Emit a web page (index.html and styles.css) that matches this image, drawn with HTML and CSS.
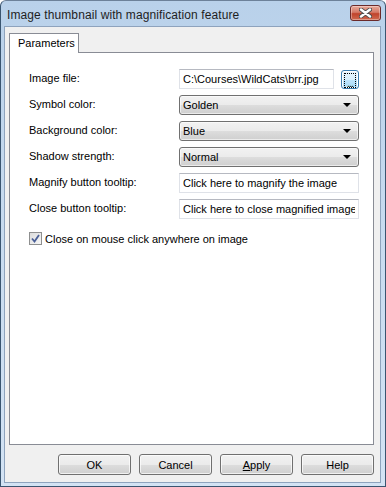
FILE: index.html
```html
<!DOCTYPE html>
<html lang="en">
<head>
  <meta charset="UTF-8" />
  <title>Image thumbnail with magnification feature</title>
  <link rel="stylesheet" href="styles.css">
</head>
<body>
  <div class="window">
    <div class="titlebar">
      <span class="title">Image thumbnail with magnification feature</span>
      <button class="close-btn" type="button" aria-label="Close">
        <svg width="13" height="10" viewBox="0 0 13 10">
          <path d="M2 1.5 L11 8.5 M11 1.5 L2 8.5" stroke="#4d4d4d" stroke-width="4.2" stroke-linecap="round" fill="none" />
          <path d="M2 1.5 L11 8.5 M11 1.5 L2 8.5" stroke="#fff" stroke-width="2.4" stroke-linecap="round" fill="none" />
        </svg>
      </button>
    </div>

    <div class="client">
      <div class="tabs">
        <div class="tab active">Parameters</div>
      </div>

      <div class="panel">
        <div class="form-grid">
          <label for="image-file">Image file:</label>
          <div class="file-row">
            <input type="text" id="image-file" class="field file-field" value="C:\Courses\WildCats\brr.jpg" />
            <button type="button" class="browse-btn"><span class="focus-rect">...</span></button>
          </div>

          <label for="symbol-color">Symbol color:</label>
          <div class="combo">
            <select id="symbol-color"><option>Golden</option></select>
          </div>

          <label for="bg-color">Background color:</label>
          <div class="combo">
            <select id="bg-color"><option>Blue</option></select>
          </div>

          <label for="shadow">Shadow strength:</label>
          <div class="combo">
            <select id="shadow"><option>Normal</option></select>
          </div>

          <label for="magnify-tip">Magnify button tooltip:</label>
          <input type="text" id="magnify-tip" class="field" value="Click here to magnify the image" />

          <label for="close-tip">Close button tooltip:</label>
          <input type="text" id="close-tip" class="field" value="Click here to close magnified image" />
        </div>

        <label class="check-row">
          <span class="checkbox">
            <svg width="9" height="9" viewBox="0 0 9 9">
              <path d="M1 4.5 L3.5 7.5 L8 1" stroke="#4a5f97" stroke-width="1.8" fill="none" />
            </svg>
          </span>
          Close on mouse click anywhere on image
        </label>
      </div>

      <div class="buttons">
        <button type="button" class="dlg-btn">OK</button>
        <button type="button" class="dlg-btn">Cancel</button>
        <button type="button" class="dlg-btn"><u>A</u>pply</button>
        <button type="button" class="dlg-btn">Help</button>
      </div>
    </div>
  </div>
</body>
</html>
```

FILE: styles.css
```css
html, body {
  margin: 0;
  padding: 0;
}
body {
  font-family: 'Liberation Sans', Arial, sans-serif;
  font-size: 11px;
  color: #000;
  background: #fff;
}

/* window frame */
.window {
  width: 386px;
  height: 487px;
  box-sizing: border-box;
  display: flex;
  flex-direction: column;
  background: linear-gradient(to bottom, #b9d1ea 0%, #c6daef 40%, #d3e3f4 100%);
  border: 1px solid #3a5570;
  border-top-color: #6d8199;
  border-radius: 6px 6px 0 0;
}
.titlebar {
  height: 25px;
  display: flex;
  align-items: flex-start;
  justify-content: space-between;
  padding: 0 4px 0 6px;
}
.title {
  font-size: 12px;
  color: #1e1e1e;
  margin-top: 7px;
  letter-spacing: 0.1px;
}
.close-btn {
  width: 31px;
  height: 16px;
  margin-top: 4px;
  padding: 0;
  border: 1px solid #6b2a2a;
  border-radius: 3px;
  background: linear-gradient(to bottom, #e9a99a 0%, #d47a68 45%, #c0432c 55%, #cf6a50 100%);
  box-shadow: inset 0 0 0 1px rgba(255,255,255,0.35);
  display: flex;
  align-items: center;
  justify-content: center;
}

.client {
  flex: 1;
  display: flex;
  flex-direction: column;
  margin: 0 4px 3px 3px;
  padding: 6px 6px 7px 4px;
  background: #f0f0f0;
  border: 1px solid #8ea3bd;
}

/* tabs */
.tabs {
  display: flex;
  position: relative;
  z-index: 1;
}
.tab {
  width: 70px;
  height: 20px;
  box-sizing: border-box;
  padding: 3px 0 0 8px;
  border: 1px solid #898c95;
  border-bottom: none;
  background: #fff;
}
.panel {
  flex: 1;
  margin-top: -1px;
  border: 1px solid #898c95;
  background: #fff;
  padding: 16px 0 0 19px;
}

.form-grid {
  display: grid;
  grid-template-columns: 150px 180px;
  grid-auto-rows: 20px;
  row-gap: 6px;
  align-items: center;
}
.form-grid label {
  color: #000;
  padding-bottom: 3px;
}
.field {
  height: 20px;
  box-sizing: border-box;
  border: 1px solid #dfe2e8;
  border-top-color: #b6b9c1;
  padding: 0 3px;
  font-family: inherit;
  font-size: 11px;
  color: #000;
  background: #fff;
  outline: none;
  width: 180px;
}
.file-row {
  display: flex;
  align-items: center;
  gap: 7px;
}
.file-field {
  width: 155px;
}
.browse-btn {
  width: 18px;
  height: 19px;
  padding: 2px;
  box-sizing: border-box;
  border: 1px solid #3c7fb1;
  border-radius: 3px;
  background: linear-gradient(to bottom, #eaf6fd 0%, #d9f0fc 50%, #bee6fd 51%, #a7d9f5 100%);
  box-shadow: inset 0 0 0 1px #fff;
  font-family: inherit;
  font-size: 11px;
}
.focus-rect {
  display: flex;
  height: 100%;
  align-items: flex-end;
  justify-content: center;
  border: 1px dotted #000;
  line-height: 8px;
  letter-spacing: -1px;
}

.combo {
  position: relative;
  height: 20px;
}
.combo select {
  appearance: none;
  -webkit-appearance: none;
  width: 180px;
  height: 20px;
  box-sizing: border-box;
  border: 1px solid #707070;
  border-radius: 3px;
  padding: 0 0 0 3px;
  font-family: inherit;
  font-size: 11px;
  color: #000;
  background: linear-gradient(to bottom, #f2f2f2 0%, #ebebeb 50%, #dddddd 51%, #cfcfcf 100%);
  box-shadow: inset 0 0 0 1px rgba(255,255,255,0.6);
  outline: none;
}
.combo::after {
  content: '';
  position: absolute;
  right: 8px;
  top: 8px;
  border-left: 4px solid transparent;
  border-right: 4px solid transparent;
  border-top: 4px solid #000;
  pointer-events: none;
}

/* checkbox row */
.check-row {
  display: flex;
  align-items: center;
  gap: 3px;
  margin-top: 13px;
}
.checkbox {
  width: 13px;
  height: 13px;
  box-sizing: border-box;
  border: 1px solid #8e8f8f;
  background: linear-gradient(135deg, #dcdcdc 0%, #f6f6f6 100%);
  display: flex;
  align-items: center;
  justify-content: center;
}

/* dialog buttons */
.buttons {
  display: flex;
  justify-content: flex-end;
  gap: 8px;
  margin-top: 9px;
}
.dlg-btn {
  width: 73px;
  height: 21px;
  box-sizing: border-box;
  border: 1px solid #707070;
  border-radius: 3px;
  background: linear-gradient(to bottom, #f2f2f2 0%, #ebebeb 50%, #dddddd 51%, #cfcfcf 100%);
  box-shadow: inset 0 0 0 1px rgba(255,255,255,0.7);
  font-family: inherit;
  font-size: 11px;
  color: #000;
  padding: 0;
}
.dlg-btn u {
  text-decoration: underline;
}
```
